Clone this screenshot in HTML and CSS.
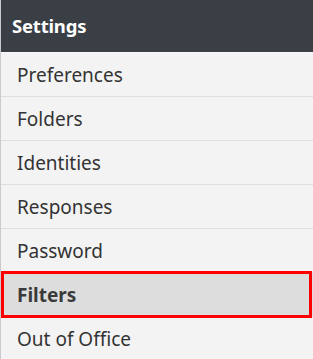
FILE: index.html
```html
<!DOCTYPE html>
<html lang="en">
	<head>
		<meta charset="utf-8">
		<title>Settings</title>
		<link rel="stylesheet" href="styles.css">
	</head>
	<body>
		<div class="sidebar">
			<div class="sidebar-header">Settings</div>
			<ul class="menu">
				<li class="menu-item">Preferences</li>
				<li class="menu-item">Folders</li>
				<li class="menu-item">Identities</li>
				<li class="menu-item">Responses</li>
				<li class="menu-item">Password</li>
				<li class="menu-item selected">Filters</li>
				<li class="menu-item">Out of Office</li>
			</ul>
		</div>
	</body>
</html>
```
FILE: styles.css
```css
body {
	margin: 0;
	font-family: "Noto Sans", "Open Sans", sans-serif;
	background: #f3f3f3;
}

.sidebar {
	width: 313px;
	border-left: 1px solid #c8cacd;
	box-sizing: border-box;
}

.sidebar-header {
	height: 52px;
	line-height: 52px;
	padding-left: 11px;
	background: #3a3f46;
	color: #fff;
	font-weight: bold;
	font-size: 18.5px;
	letter-spacing: -0.2px;
	border-bottom: 1px solid #fafafa;
}

.menu {
	list-style: none;
	margin: 0;
	padding: 0;
}

.menu-item {
	position: relative;
	height: 43px;
	line-height: 44px;
	padding-left: 16px;
	font-size: 19px;
	color: #333;
	border-bottom: 1px solid #dedede;
}

.menu-item.selected {
	background: #dddddd;
	font-weight: bold;
	color: #3a3a3a;
}

/* red highlight frame round the active item */
.menu-item.selected::after {
	content: "";
	position: absolute;
	top: -2px;
	bottom: -2px;
	left: 0;
	right: 1px;
	border: 3px solid #f00;
}
```
